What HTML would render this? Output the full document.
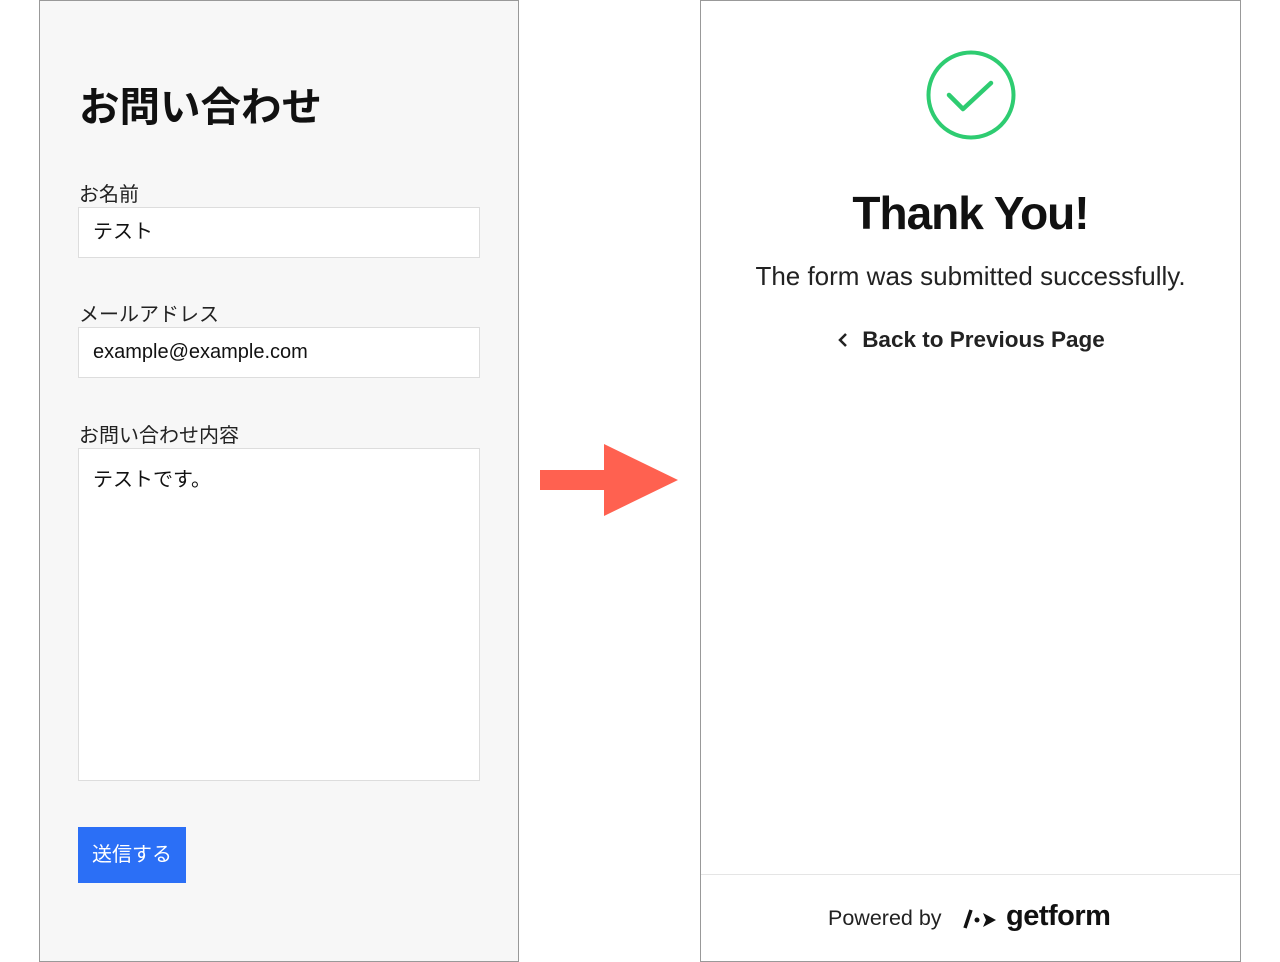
<!DOCTYPE html>
<html><head><meta charset="utf-8"><style>
*{margin:0;padding:0;box-sizing:border-box}
body{width:1280px;height:960px;background:#fff;position:relative;overflow:hidden;font-family:"Liberation Sans","Noto Sans CJK JP",sans-serif;color:#111}
.a{position:absolute}
.left{left:39px;top:0;width:480px;height:962px;background:#f7f7f7;border:1px solid #999}
.lbl{font-size:20px;color:#222}
.box{background:#fff;border:1px solid #ddd;font-size:20px;padding-left:14px}
.right{left:700px;top:0;width:541px;height:962px;background:#fff;border:1px solid #999}
</style></head><body>
<div class="a left"></div>
<div class="a" style="left:79px;top:81px;font-size:40.5px;font-weight:bold;line-height:52px">お問い合わせ</div>
<div class="a lbl" style="left:79px;top:178px">お名前</div>
<div class="a box" style="left:78px;top:207px;width:402px;height:51px;line-height:49px">テスト</div>
<div class="a lbl" style="left:79px;top:298px">メールアドレス</div>
<div class="a box" style="left:78px;top:327px;width:402px;height:51px;line-height:49px">example@example.com</div>
<div class="a lbl" style="left:79px;top:419px">お問い合わせ内容</div>
<div class="a box" style="left:78px;top:448px;width:402px;height:333px;padding-top:14px">テストです。</div>
<div class="a" style="left:78px;top:827px;width:108px;height:56px;background:#2b6ff6;color:#fff;font-size:20px;line-height:56px;text-align:center">送信する</div>
<svg class="a" style="left:538px;top:442px" width="142" height="76"><polygon points="2,28 66,28 66,2 140,38 66,74 66,48 2,48" fill="#ff6150"/></svg>
<div class="a right"></div>
<svg class="a" style="left:925px;top:49px" width="92" height="92"><circle cx="46" cy="46" r="42.5" fill="none" stroke="#2ecc71" stroke-width="4"/><path d="M24 46 L38 60 L66 34" fill="none" stroke="#2ecc71" stroke-width="4.5" stroke-linecap="round" stroke-linejoin="round"/></svg>
<div class="a" style="left:700px;width:541px;top:186px;text-align:center;font-size:46px;font-weight:bold;letter-spacing:-1px">Thank You!</div>
<div class="a" style="left:700px;width:541px;top:261px;text-align:center;font-size:26px;color:#222">The form was submitted successfully.</div>
<div class="a" style="left:700px;width:541px;top:327px;text-align:center;font-size:22.5px;font-weight:bold;color:#222"><svg width="14" height="16" style="margin-right:12px;vertical-align:-1px"><path d="M10 2 L4 8 L10 14" fill="none" stroke="#222" stroke-width="2.5"/></svg>Back to Previous Page</div>
<div class="a" style="left:701px;width:539px;top:874px;height:1px;background:#e5e5e5"></div>
<div class="a" style="left:828px;top:906px;font-size:21.5px;color:#222">Powered by</div>
<svg class="a" style="left:963px;top:906px" width="38" height="24"><path d="M2 22 L8 4" stroke="#111" stroke-width="3.5"/><circle cx="14" cy="14" r="2.5" fill="#111"/><path d="M20 7 L33 14 L20 21 L23 14 Z" fill="#111"/></svg>
<div class="a" style="left:1006px;top:900px;font-size:29px;font-weight:bold;color:#111;letter-spacing:-0.5px">getform</div>
</body></html>
